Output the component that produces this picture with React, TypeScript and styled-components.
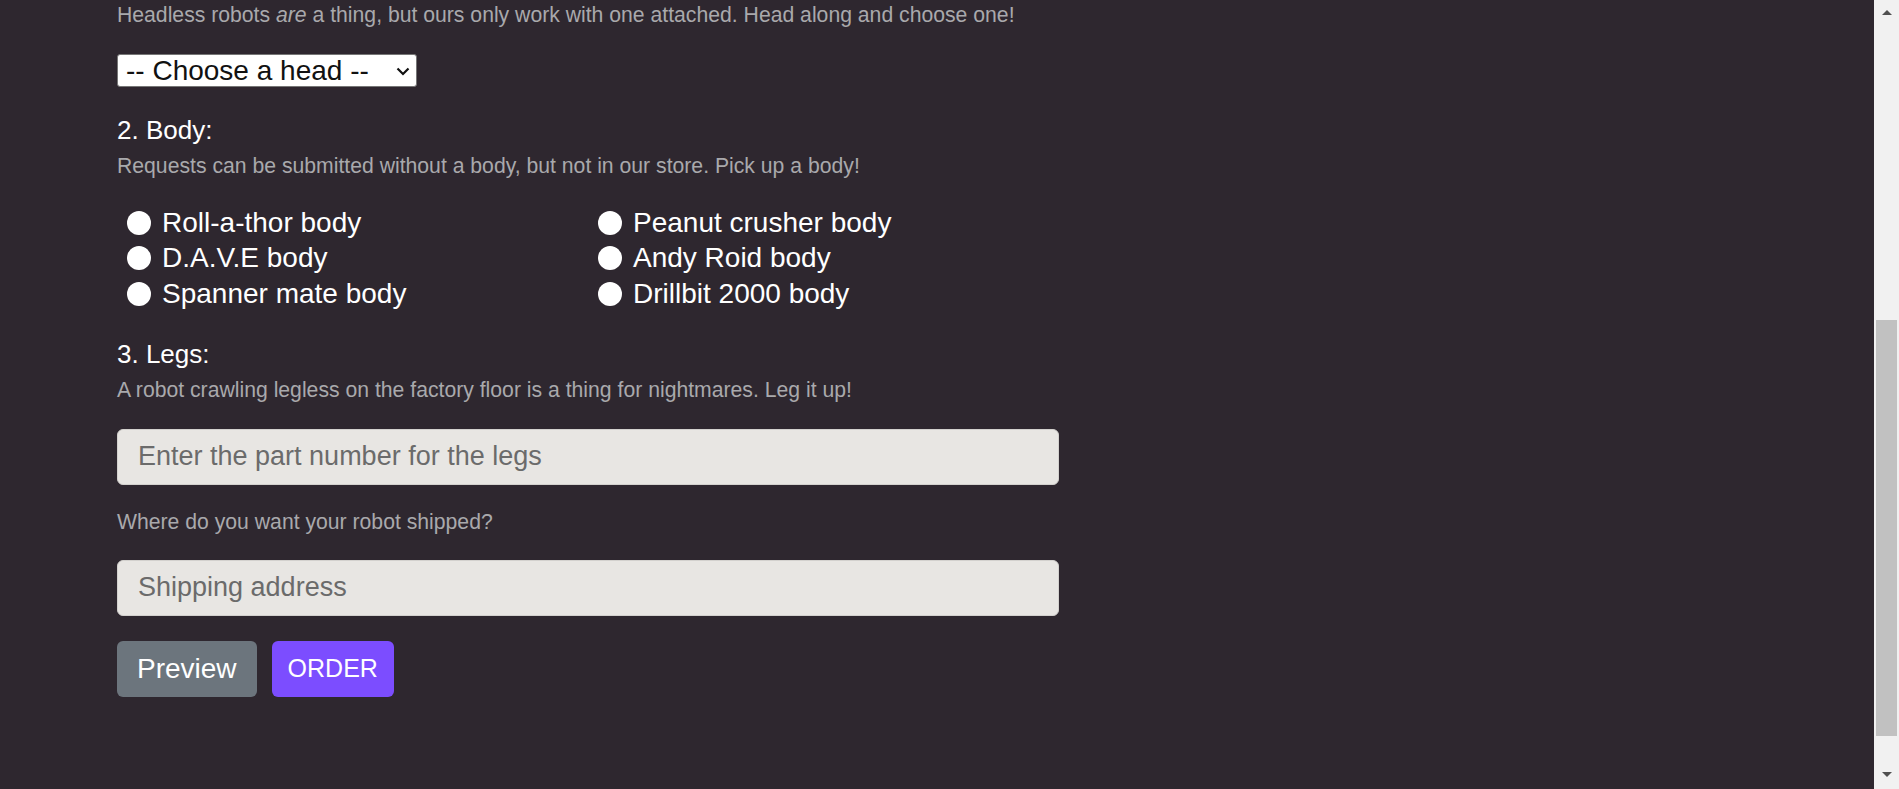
import React, { useState } from 'react';
import styled, { createGlobalStyle } from 'styled-components';

const GlobalStyle = createGlobalStyle`
  html, body {
    margin: 0;
    background-color: #2e272f;
  }
  body {
    font-family: 'Liberation Sans', Arial, sans-serif;
    color: #ffffff;
  }
  * {
    box-sizing: border-box;
  }
`;

const Page = styled.div`
  height: 100vh;
  overflow: hidden;
  padding: 3px 0 0 117px;
`;

const Form = styled.form`
  width: 942px;
  display: flex;
  flex-direction: column;
  align-items: flex-start;
`;

const SectionTitle = styled.h2`
  margin: 0 0 9px;
  font-size: 26px;
  line-height: 30px;
  font-weight: normal;
  color: #ffffff;
`;

const Hint = styled.p<{ $gap?: number }>`
  margin: 0 0 ${(p) => p.$gap ?? 27}px;
  font-size: 21.2px;
  line-height: 24px;
  color: #a9a9ac;

  em {
    font-style: italic;
  }
`;

const SelectWrap = styled.div`
  position: relative;
  margin-bottom: 28px;
`;

const HeadSelect = styled.select`
  appearance: none;
  display: block;
  height: 33px;
  padding: 0 47px 0 8px;
  font-family: inherit;
  font-size: 28px;
  color: #111111;
  background-color: #ffffff;
  border: 1px solid #767676;
  border-radius: 3px;
`;

const Chevron = styled.svg`
  position: absolute;
  top: 13px;
  right: 7px;
  width: 14px;
  height: 9px;
  pointer-events: none;
`;

const RadioGrid = styled.div`
  width: 100%;
  display: grid;
  grid-template-columns: 1fr 1fr;
  grid-auto-rows: 35.5px;
  margin-bottom: 27px;
`;

const RadioLabel = styled.label`
  display: flex;
  align-items: center;
  gap: 11px;
  padding-left: 10px;
  font-size: 28px;
  color: #ffffff;
  cursor: pointer;
`;

const Radio = styled.input`
  appearance: none;
  width: 24px;
  height: 24px;
  margin: 0;
  border-radius: 50%;
  background-color: #ffffff;
  flex-shrink: 0;

  &:checked {
    box-shadow: inset 0 0 0 6px #7c4dff;
  }
`;

const TextInput = styled.input`
  width: 100%;
  height: 56px;
  margin-bottom: 25px;
  padding: 0 20px;
  font-family: inherit;
  font-size: 27px;
  color: #222222;
  background-color: #e8e6e3;
  border: 1px solid #d3d1ce;
  border-radius: 6px;

  &::placeholder {
    color: #6b6b6b;
  }
`;

const Actions = styled.div`
  display: flex;
  gap: 15px;
`;

const Button = styled.button<{ $primary?: boolean }>`
  height: 56px;
  padding: 0 ${(p) => (p.$primary ? 16 : 20)}px;
  font-family: inherit;
  font-size: ${(p) => (p.$primary ? 25 : 28)}px;
  color: #ffffff;
  background-color: ${(p) => (p.$primary ? '#7c4dff' : '#6c757d')};
  border: none;
  border-radius: 6px;
  cursor: pointer;
`;

// the page is scrolled down in the shot, so the window scrollbar sits over the right edge
const ScrollTrack = styled.div`
  position: fixed;
  top: 0;
  right: 0;
  width: 25px;
  height: 100vh;
  display: flex;
  flex-direction: column;
  align-items: center;
  background-color: #f1f1f1;
`;

const ScrollArrow = styled.div<{ $down?: boolean }>`
  width: 0;
  height: 0;
  margin: ${(p) => (p.$down ? 'auto 0 12px' : '10px 0 0')};
  border-left: 5px solid transparent;
  border-right: 5px solid transparent;
  ${(p) =>
    p.$down ? 'border-top: 5px solid #505050;' : 'border-bottom: 5px solid #505050;'}
`;

const ScrollThumb = styled.div`
  position: absolute;
  left: 2px;
  right: 2px;
  top: 320px;
  height: 416px;
  background-color: #c1c1c1;
`;

const bodies = [
  'Roll-a-thor body',
  'Peanut crusher body',
  'D.A.V.E body',
  'Andy Roid body',
  'Spanner mate body',
  'Drillbit 2000 body',
];

const heads = ['Tin-can head', 'Bolt-on head', 'Visor head', 'Dome head'];

export default function App() {
  const [body, setBody] = useState('');

  return (
    <Page>
      <GlobalStyle />
      <Form onSubmit={(e) => e.preventDefault()}>
        <Hint>
          Headless robots <em>are</em> a thing, but ours only work with one
          attached. Head along and choose one!
        </Hint>
        <SelectWrap>
          <HeadSelect defaultValue="">
            <option value="">-- Choose a head --</option>
            {heads.map((h) => (
              <option key={h} value={h}>
                {h}
              </option>
            ))}
          </HeadSelect>
          <Chevron viewBox="0 0 14 9">
            <polyline
              points="1.5,1.5 7,7 12.5,1.5"
              fill="none"
              stroke="#111111"
              strokeWidth="2.2"
            />
          </Chevron>
        </SelectWrap>

        <SectionTitle>2. Body:</SectionTitle>
        <Hint>
          Requests can be submitted without a body, but not in our store. Pick
          up a body!
        </Hint>
        <RadioGrid>
          {bodies.map((b) => (
            <RadioLabel key={b}>
              <Radio
                type="radio"
                name="body"
                value={b}
                checked={body === b}
                onChange={() => setBody(b)}
              />
              {b}
            </RadioLabel>
          ))}
        </RadioGrid>

        <SectionTitle>3. Legs:</SectionTitle>
        <Hint>
          A robot crawling legless on the factory floor is a thing for
          nightmares. Leg it up!
        </Hint>
        <TextInput placeholder="Enter the part number for the legs" />

        <Hint $gap={26}>Where do you want your robot shipped?</Hint>
        <TextInput placeholder="Shipping address" />

        <Actions>
          <Button type="button">Preview</Button>
          <Button type="submit" $primary>
            ORDER
          </Button>
        </Actions>
      </Form>

      <ScrollTrack>
        <ScrollArrow />
        <ScrollThumb />
        <ScrollArrow $down />
      </ScrollTrack>
    </Page>
  );
}
